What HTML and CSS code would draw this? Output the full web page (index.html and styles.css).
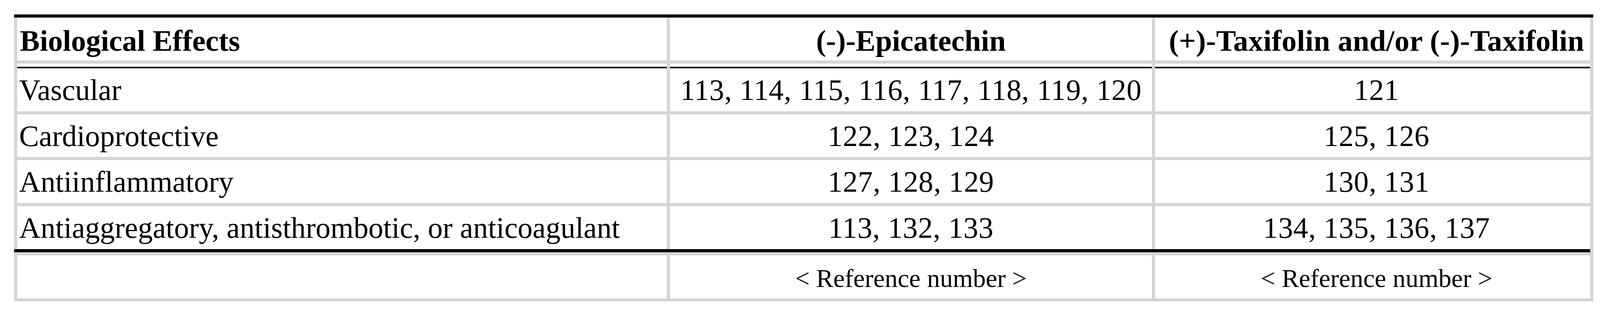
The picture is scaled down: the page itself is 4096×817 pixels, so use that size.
FILE: index.html
```html
<!DOCTYPE html>
<html>
<head>
<meta charset="utf-8">
<title>Biological Effects</title>
<link rel="stylesheet" href="styles.css">
</head>
<body>
<div class="table">
  <div class="topbar"></div>
  <div class="tbody">
    <div class="row head">
      <div class="cell c1">Biological Effects</div>
      <div class="cell c2">(-)-Epicatechin</div>
      <div class="cell c3 wide">(+)-Taxifolin and/or (-)-Taxifolin</div>
    </div>
    <div class="row first">
      <div class="cell c1">Vascular</div>
      <div class="cell c2 num">113, 114, 115, 116, 117, 118, 119, 120</div>
      <div class="cell c3 num">121</div>
    </div>
    <div class="row short">
      <div class="cell c1">Cardioprotective</div>
      <div class="cell c2 num">122, 123, 124</div>
      <div class="cell c3 num">125, 126</div>
    </div>
    <div class="row">
      <div class="cell c1">Antiinflammatory</div>
      <div class="cell c2 num">127, 128, 129</div>
      <div class="cell c3 num">130, 131</div>
    </div>
    <div class="group">
      <div class="row">
        <div class="cell c1">Antiaggregatory, antisthrombotic, or anticoagulant</div>
        <div class="cell c2 num">113, 132, 133</div>
        <div class="cell c3 num">134, 135, 136, 137</div>
      </div>
      <div class="bottombar"></div>
    </div>
    <div class="row foot">
      <div class="cell c1"></div>
      <div class="cell c2">&lt; Reference number &gt;</div>
      <div class="cell c3">&lt; Reference number &gt;</div>
    </div>
  </div>
</div>
</body>
</html>
```
FILE: styles.css
```css
html, body {
  margin: 0;
  padding: 0;
  background: #ffffff;
}

.table {
  margin: 37px 0 0 36px;
  width: 4043px;
  font-family: "Liberation Serif", "Times New Roman", serif;
  color: #000000;
}

.topbar {
  height: 8px;
  background: #050809;
}

.tbody {
  background: #d4d5d4;
  padding: 0 8px 8px 8px;
  display: flex;
  flex-direction: column;
  gap: 8px;
}

.row {
  display: flex;
  gap: 8px;
  height: 110px;
}

.cell {
  background: #ffffff;
  font-size: 76px;
  line-height: 84px;
  padding-top: 13px;
  white-space: nowrap;
  box-sizing: border-box;
}

.c1 {
  width: 1663px;
  padding-left: 5px;
}

.c2 {
  width: 1234px;
  text-align: center;
}

.c3 {
  width: 1114px;
  text-align: center;
  padding-left: 20px;
}

.num {
  letter-spacing: 0.6px;
}

.head .cell {
  font-weight: bold;
  padding-top: 17px;
}

.head .wide {
  letter-spacing: 0.4px;
}

.head .c1 {
  padding-left: 7px;
}

.first {
  height: 122px;
}

.first .cell {
  padding-top: 25px;
  background: linear-gradient(#ffffff 0 8px, #050809 8px 12px, #ffffff 12px);
}

.short {
  height: 109px;
}

.group {
  display: flex;
  flex-direction: column;
}

.bottombar {
  height: 8px;
  background: #050809;
  margin-left: -8px;
}

.foot .cell {
  font-size: 66px;
  line-height: 73px;
  padding-top: 22px;
}
```
